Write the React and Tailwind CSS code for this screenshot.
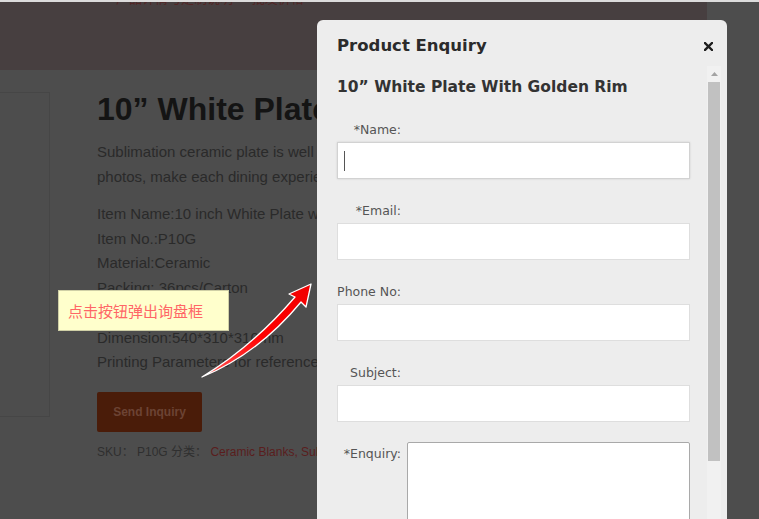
import React from "react";

const fields = [
  { label: "*Name:", caret: true },
  { label: "*Email:" },
  { label: "Phone No:" },
  { label: "Subject:" },
];

function Arrow() {
  return (
    <svg
      className="absolute left-[190px] top-[260px]"
      width="130"
      height="125"
      viewBox="0 0 130 125"
    >
      <defs>
        <linearGradient id="shaft" x1="0" y1="1" x2="1" y2="0">
          <stop offset="0" stopColor="#ff5a5a" />
          <stop offset="0.5" stopColor="#ff0000" />
          <stop offset="1" stopColor="#f00000" />
        </linearGradient>
      </defs>
      <path
        d="M12 117 Q62 87 105 37 L99 34 L121 24 L116 47 L111 42 Q68 94 12 117 Z"
        fill="url(#shaft)"
        stroke="#ffffff"
        strokeWidth="1.3"
        strokeLinejoin="round"
      />
    </svg>
  );
}

function EnquiryModal() {
  return (
    <div className="absolute left-[317px] top-[20px] w-[410px] h-[510px] rounded-t-[6px] bg-[#ededed] flex flex-col font-['DejaVu_Sans',Verdana,sans-serif]">
      {/* header */}
      <div className="h-[46px] pt-[6px] pl-[20px] pr-[14px] flex items-center justify-between shrink-0">
        <h2 className="text-[16.5px] font-bold text-[#2b2b2b] leading-[22px]">Product Enquiry</h2>
        <svg width="9" height="9" viewBox="0 0 9 9">
          <path d="M1 1 L8 8 M8 1 L1 8" stroke="#1e1e1e" strokeWidth="2.4" strokeLinecap="square" />
        </svg>
      </div>

      {/* body */}
      <div className="flex flex-1 mr-[6px] overflow-hidden">
        <div className="flex-1 pl-[20px] pr-[17px] pt-[11px]">
          <h3 className="text-[15.5px] font-bold leading-[20px] text-[#333333] mb-[25px] whitespace-nowrap">
            10” White Plate With Golden Rim
          </h3>

          {fields.map((f, i) => (
            <div key={f.label} className={i === fields.length - 1 ? "mb-[20px]" : "mb-[24px]"}>
              <div className="w-[64px] text-right text-[12.5px] leading-[16px] text-[#555555] mb-[4px] whitespace-nowrap">
                {f.label}
              </div>
              <div
                className={
                  "h-[37px] bg-white border flex items-center pl-[6px] " +
                  (f.caret ? "border-[#d2d2d2] shadow-[0_0_2px_rgba(0,0,0,0.12)]" : "border-[#dedede]")
                }
              >
                {f.caret && <span className="w-[1px] h-[20px] bg-[#555555]" />}
              </div>
            </div>
          ))}

          <div className="flex gap-[6px]">
            <div className="w-[64px] pt-[4px] text-right text-[12.5px] leading-[16px] text-[#555555] whitespace-nowrap">
              *Enquiry:
            </div>
            <div className="flex-1 h-[100px] bg-white border border-[#a9a9a9] rounded-[2px]" />
          </div>
        </div>

        {/* scrollbar */}
        <div className="w-[14px] bg-[#f1f1f1] flex flex-col items-center shrink-0">
          <div className="h-[16px] flex items-center justify-center">
            <svg width="7" height="4" viewBox="0 0 7 4">
              <path d="M0 4 L3.5 0 L7 4 Z" fill="#a3a3a3" />
            </svg>
          </div>
          <div className="w-[12px] h-[379px] bg-[#c1c1c1]" />
        </div>
      </div>
    </div>
  );
}

export default function App() {
  return (
    <div className="relative w-[759px] h-[519px] overflow-hidden bg-[#4d4d4d] font-['Liberation_Sans',Arial,sans-serif]">
      <div className="h-[2px] bg-[#dcdcdc]" />

      {/* site header (dimmed) */}
      <div className="w-[707px] h-[68px] bg-[#473f40] overflow-hidden">
        <p className="-mt-[12px] ml-[100px] text-[13px] leading-[16px] text-[#522626] font-['Noto_Sans_CJK_SC',sans-serif]">
          · 产品详情与定制说明 · 批发价格
        </p>
      </div>

      {/* product area */}
      <div className="flex pt-[22px]">
        <div className="w-[50px] h-[325px] border-y border-r border-[#464646] shrink-0" />

        <div className="ml-[47px] w-[600px]">
          <h1 className="text-[32px] leading-[34px] font-bold text-[#141414] whitespace-nowrap">
            10” White Plate With Golden Rim
          </h1>

          <p className="mt-[13px] text-[15px] leading-[25px] text-[#2a2a2a]">
            Sublimation ceramic plate is well suited for printing
            <br />
            photos, make each dining experience more memorable.
          </p>

          <div className="mt-[13px] text-[15px] leading-[24.7px] text-[#2a2a2a] whitespace-nowrap">
            <p>Item Name:10 inch White Plate with Golden Rim</p>
            <p>Item No.:P10G</p>
            <p>Material:Ceramic</p>
            <p>Packing: 36pcs/Carton</p>
            <p>Weight:13kg</p>
            <p>Dimension:540*310*310mm</p>
            <p>Printing Parameters for reference: 200°C, 150s</p>
          </div>

          <button className="mt-[17px] w-[105px] h-[40px] bg-[#4a1c09] rounded-[2px] text-[12px] font-bold text-[#6c4334]">
            Send Inquiry
          </button>

          <p className="mt-[12px] text-[12px] leading-[16px] text-[#2f2f2f] whitespace-nowrap font-['Liberation_Sans','Noto_Sans_CJK_SC',sans-serif]">
            SKU： P10G 分类：{" "}
            <span className="text-[#5a1d1d]">Ceramic Blanks, Sublimation Plates</span>
          </p>
        </div>
      </div>

      {/* hint tooltip */}
      <div className="absolute left-[58px] top-[290px] w-[171px] h-[41px] bg-[#ffffcc] border border-[#cfcfa6] flex items-center pl-[9px]">
        <span className="text-[15px] text-[#ff6666] font-['Noto_Sans_CJK_SC',sans-serif] leading-[20px]">
          点击按钮弹出询盘框
        </span>
      </div>

      <Arrow />

      <EnquiryModal />
    </div>
  );
}
